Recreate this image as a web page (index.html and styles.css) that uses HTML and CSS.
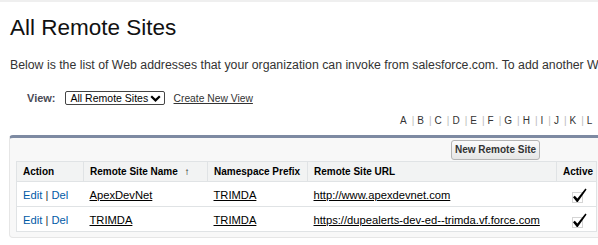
FILE: index.html
```html
<!DOCTYPE html>
<html>
<head>
<meta charset="utf-8">
<title>All Remote Sites</title>
<link rel="stylesheet" href="styles.css">
</head>
<body>
<div class="topline"></div>
<h1 class="title">All Remote Sites</h1>
<p class="desc">Below is the list of Web addresses that your organization can invoke from salesforce.com. To add another Web address, click New Remote Site.</p>
<div class="view-row">
  <span class="view-label">View:</span>
  <span class="select">All Remote Sites<svg class="chev" width="11" height="7" viewBox="0 0 11 7"><path d="M1.2 1.2 L5.5 5.4 L9.8 1.2" fill="none" stroke="#000" stroke-width="2.2"/></svg></span>
  <a class="create" href="#">Create New View</a>
</div>
<div class="rolodex"><span class="ltr">A</span><span class="sep">|</span><span class="ltr">B</span><span class="sep">|</span><span class="ltr">C</span><span class="sep">|</span><span class="ltr">D</span><span class="sep">|</span><span class="ltr">E</span><span class="sep">|</span><span class="ltr">F</span><span class="sep">|</span><span class="ltr">G</span><span class="sep">|</span><span class="ltr">H</span><span class="sep">|</span><span class="ltr">I</span><span class="sep">|</span><span class="ltr">J</span><span class="sep">|</span><span class="ltr">K</span><span class="sep">|</span><span class="ltr">L</span></div>
<div class="panel">
  <div class="panel-head"><button class="btn" type="button">New Remote Site</button></div>
  <table class="list">
    <colgroup>
      <col class="w-action">
      <col class="w-name">
      <col class="w-prefix">
      <col class="w-url">
      <col class="w-active">
    </colgroup>
    <thead>
      <tr class="hdr">
        <th>Action</th>
        <th>Remote Site Name <span class="sort">↑</span></th>
        <th>Namespace Prefix</th>
        <th>Remote Site URL</th>
        <th>Active</th>
      </tr>
    </thead>
    <tbody>
      <tr>
        <td><a class="act" href="#">Edit</a> <span class="bar">|</span> <a class="act" href="#">Del</a></td>
        <td><a class="rec" href="#">ApexDevNet</a></td>
        <td><a class="rec" href="#">TRIMDA</a></td>
        <td><a class="rec" href="#">http://www.apexdevnet.com</a></td>
        <td class="chk"><svg width="15" height="15" viewBox="0 0 15 15"><rect x="0.5" y="4.5" width="10" height="10" fill="none" stroke="#aaa" stroke-width="1" stroke-dasharray="1 1"/><path d="M1 9.2 L2.8 7.8 L5.4 10.6 L13.4 0.6 L14.6 1.6 L5.8 14 L4.8 14 Z" fill="#000"/></svg></td>
      </tr>
      <tr>
        <td><a class="act" href="#">Edit</a> <span class="bar">|</span> <a class="act" href="#">Del</a></td>
        <td><a class="rec" href="#">TRIMDA</a></td>
        <td><a class="rec" href="#">TRIMDA</a></td>
        <td><a class="rec" href="#">https://dupealerts-dev-ed--trimda.vf.force.com</a></td>
        <td class="chk"><svg width="15" height="15" viewBox="0 0 15 15"><rect x="0.5" y="4.5" width="10" height="10" fill="none" stroke="#aaa" stroke-width="1" stroke-dasharray="1 1"/><path d="M1 9.2 L2.8 7.8 L5.4 10.6 L13.4 0.6 L14.6 1.6 L5.8 14 L4.8 14 Z" fill="#000"/></svg></td>
      </tr>
    </tbody>
  </table>
</div>
</body>
</html>
```
FILE: styles.css
```css
html, body {
  margin: 0;
  padding: 0;
  background: #fff;
  overflow: hidden;
}
body {
  font-family: "Liberation Sans", Arial, sans-serif;
  color: #000;
}
.topline {
  height: 2px;
  background: #efefef;
}
.title {
  margin: 13px 0 0 10px;
  font-size: 22.5px;
  font-weight: normal;
  line-height: 26px;
  color: #111;
}
.desc {
  margin: 17px 0 0 10px;
  font-size: 12.3px;
  line-height: 15px;
  color: #333;
  white-space: nowrap;
}
.view-row {
  display: flex;
  align-items: center;
  gap: 9px;
  height: 14px;
  margin: 18px 0 0 27px;
}
.view-label {
  font-size: 11px;
  font-weight: bold;
  color: #4a4a56;
}
.select {
  box-sizing: border-box;
  width: 100px;
  height: 14px;
  display: inline-flex;
  align-items: center;
  justify-content: space-between;
  padding: 0 3px 0 5px;
  border: 1px solid #444;
  border-radius: 2px;
  font-size: 10.5px;
  color: #000;
}
.chev {
  display: block;
}
.create {
  font-size: 10.3px;
  color: #333;
  text-decoration: underline;
}
.rolodex {
  margin: 10px 0 0 400px;
  font-size: 10px;
  line-height: 12px;
  white-space: nowrap;
  color: #333;
}
.ltr {
  display: inline-block;
}
.sep {
  display: inline-block;
  color: #bbb;
  margin: 0 3px 0 5px;
}
.panel {
  box-sizing: border-box;
  width: 640px;
  margin: 8px 0 0 9px;
  padding: 1px 0 5px 6px;
  background: #f8f8f8;
  border: 1px solid #e6e6e6;
  border-top: 3px solid #7d8aa2;
  border-radius: 4px;
}
.panel-head {
  height: 22px;
  padding-left: 435px;
}
.btn {
  box-sizing: border-box;
  height: 20px;
  width: 89px;
  padding: 0 2px;
  white-space: nowrap;
  font-family: "Liberation Sans", Arial, sans-serif;
  font-size: 10px;
  font-weight: bold;
  color: #333;
  background: linear-gradient(#fbfbfb, #e6e6e6);
  border: 1px solid #b5b5b5;
  border-radius: 3px;
}
.list {
  border-collapse: collapse;
  background: #fff;
  border: 1px solid #e0e3e5;
  table-layout: fixed;
  width: 580px;
}
.w-action { width: 67px; }
.w-name { width: 124px; }
.w-prefix { width: 100px; }
.w-url { width: 249px; }
.w-active { width: 40px; }
.list th {
  background: #f2f3f3;
  font-size: 10px;
  font-weight: bold;
  color: #000;
  text-align: left;
  line-height: 19px;
  height: 19px;
  padding: 0 6px;
  border: 1px solid #e0e3e5;
  white-space: nowrap;
  overflow: hidden;
}
.sort {
  margin-left: 4px;
  font-weight: normal;
}
.list td {
  font-size: 11.2px;
  line-height: 13px;
  padding: 7px 6px 4px;
  border-bottom: 1px solid #e0e3e5;
  white-space: nowrap;
}
.act {
  color: #015ba7;
  text-decoration: none;
}
.bar {
  color: #333;
}
.rec {
  color: #000;
  text-decoration: underline;
}
.list td.chk {
  padding: 3px 0 0 15px;
  line-height: 0;
}
.chk svg {
  display: block;
}
```
